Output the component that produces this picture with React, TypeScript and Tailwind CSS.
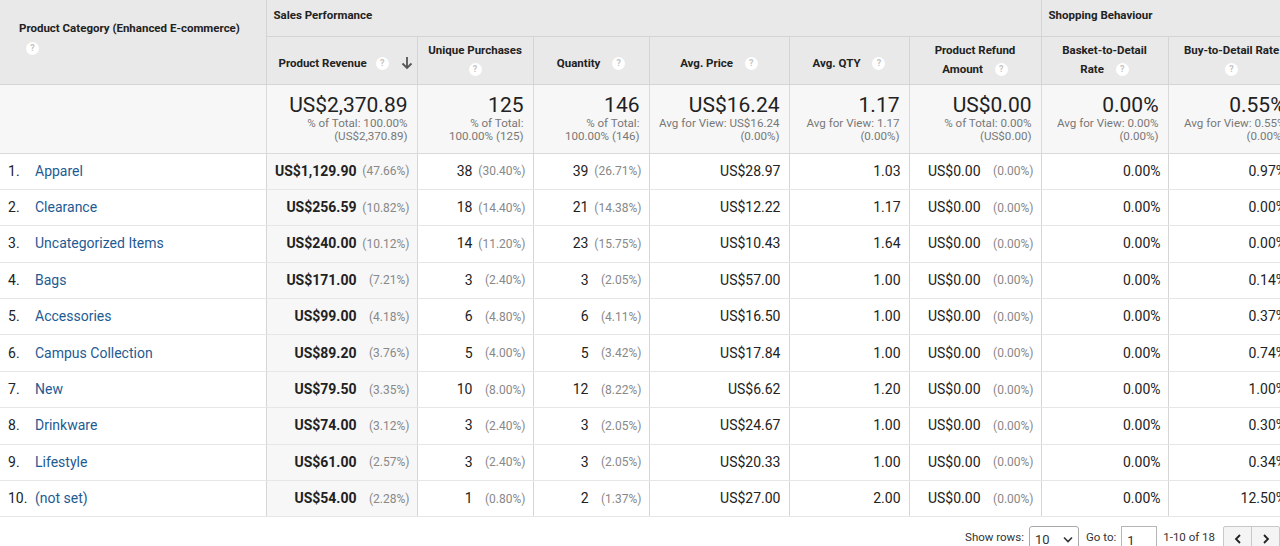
import React from "react";

type Row = {
  name: string;
  rev: string;
  revPct: string;
  uniq: string;
  uniqPct: string;
  qty: string;
  qtyPct: string;
  price: string;
  avgQty: string;
  btd: string;
};

const rows: Row[] = [
  { name: "Apparel", rev: "US$1,129.90", revPct: "(47.66%)", uniq: "38", uniqPct: "(30.40%)", qty: "39", qtyPct: "(26.71%)", price: "US$28.97", avgQty: "1.03", btd: "0.97%" },
  { name: "Clearance", rev: "US$256.59", revPct: "(10.82%)", uniq: "18", uniqPct: "(14.40%)", qty: "21", qtyPct: "(14.38%)", price: "US$12.22", avgQty: "1.17", btd: "0.00%" },
  { name: "Uncategorized Items", rev: "US$240.00", revPct: "(10.12%)", uniq: "14", uniqPct: "(11.20%)", qty: "23", qtyPct: "(15.75%)", price: "US$10.43", avgQty: "1.64", btd: "0.00%" },
  { name: "Bags", rev: "US$171.00", revPct: "(7.21%)", uniq: "3", uniqPct: "(2.40%)", qty: "3", qtyPct: "(2.05%)", price: "US$57.00", avgQty: "1.00", btd: "0.14%" },
  { name: "Accessories", rev: "US$99.00", revPct: "(4.18%)", uniq: "6", uniqPct: "(4.80%)", qty: "6", qtyPct: "(4.11%)", price: "US$16.50", avgQty: "1.00", btd: "0.37%" },
  { name: "Campus Collection", rev: "US$89.20", revPct: "(3.76%)", uniq: "5", uniqPct: "(4.00%)", qty: "5", qtyPct: "(3.42%)", price: "US$17.84", avgQty: "1.00", btd: "0.74%" },
  { name: "New", rev: "US$79.50", revPct: "(3.35%)", uniq: "10", uniqPct: "(8.00%)", qty: "12", qtyPct: "(8.22%)", price: "US$6.62", avgQty: "1.20", btd: "1.00%" },
  { name: "Drinkware", rev: "US$74.00", revPct: "(3.12%)", uniq: "3", uniqPct: "(2.40%)", qty: "3", qtyPct: "(2.05%)", price: "US$24.67", avgQty: "1.00", btd: "0.30%" },
  { name: "Lifestyle", rev: "US$61.00", revPct: "(2.57%)", uniq: "3", uniqPct: "(2.40%)", qty: "3", qtyPct: "(2.05%)", price: "US$20.33", avgQty: "1.00", btd: "0.34%" },
  { name: "(not set)", rev: "US$54.00", revPct: "(2.28%)", uniq: "1", uniqPct: "(0.80%)", qty: "2", qtyPct: "(1.37%)", price: "US$27.00", avgQty: "2.00", btd: "12.50%" },
];

function Help() {
  return (
    <span className="inline-flex h-[13px] w-[13px] items-center justify-center rounded-full bg-white align-middle text-[9px] font-bold leading-none text-[#c4c4c4]">
      ?
    </span>
  );
}

function Total({ big, l1, l2 }: { big: string; l1: string; l2: string }) {
  return (
    <td className="border-r border-b border-[#dadada] bg-[#f7f7f7] pr-[9px] text-right align-top pt-[8px]">
      <div className="text-[21px] leading-[24px] text-[#222]">{big}</div>
      <div className="text-[11.6px] leading-[13px] text-[#777]">{l1}</div>
      <div className="text-[11.6px] leading-[13px] text-[#777]">{l2}</div>
    </td>
  );
}

function Pair({ v, p, bold, bg }: { v: string; p: string; bold?: boolean; bg?: boolean }) {
  return (
    <td className={`border-r border-b border-r-[#d6d6d6] border-b-[#e6e6e6] pr-[7px] ${bg ? "bg-[#f7f7f7]" : ""}`}>
      <div className="flex items-center justify-end">
        <span className={`text-[14px] ${bold ? "font-bold" : ""} text-[#222]`}>{v}</span>
        <span className="w-[53px] text-right text-[12px] text-[#888]">{p}</span>
      </div>
    </td>
  );
}

export default function App() {
  const hd = "border-r border-b border-[#d4d4d4] bg-[#e9e9e9] text-center text-[11.5px] font-bold leading-[19px] text-[#222]";
  return (
    <div className="h-[546px] w-[1280px] overflow-hidden bg-white" style={{ fontFamily: "Roboto, 'Liberation Sans', sans-serif" }}>
      <table className="w-[1295px] table-fixed border-collapse">
        <colgroup>
          <col className="w-[266px]" />
          <col className="w-[151px]" />
          <col className="w-[116px]" />
          <col className="w-[116px]" />
          <col className="w-[140px]" />
          <col className="w-[120px]" />
          <col className="w-[132px]" />
          <col className="w-[127px]" />
          <col className="w-[127px]" />
        </colgroup>
        <thead>
          <tr className="h-[36px]">
            <th rowSpan={2} className="border-r border-b border-[#d4d4d4] bg-[#e9e9e9] pl-[19px] pt-[18px] text-left align-top text-[11.5px] font-bold leading-[20px] text-[#222]">
              <div>Product Category (Enhanced E-commerce)</div>
              <div className="pl-[7px]"><Help /></div>
            </th>
            <th colSpan={6} className="border-r border-b border-[#d4d4d4] bg-[#e9e9e9] pl-[7px] pb-[5px] text-left text-[11.5px] font-bold text-[#222]">
              Sales Performance
            </th>
            <th colSpan={2} className="border-b border-[#d4d4d4] bg-[#e9e9e9] pl-[7px] pb-[5px] text-left text-[11.5px] font-bold text-[#222]">
              Shopping Behaviour
            </th>
          </tr>
          <tr className="h-[48px]">
            <th className={hd}>
              <div className="flex items-center pl-[12px] pr-[4px] pt-[6px]">
                <span>Product Revenue</span>
                <span className="ml-[9px]"><Help /></span>
                <svg className="ml-auto" width="12" height="14" viewBox="0 0 12 14">
                  <path d="M6 1v11M1.5 7.5L6 12l4.5-4.5" stroke="#555" strokeWidth="1.8" fill="none" />
                </svg>
              </div>
            </th>
            <th className={hd}>
              <div>Unique Purchases</div>
              <div><Help /></div>
            </th>
            <th className={hd}>
              <span className="pt-[6px] inline-block">Quantity <span className="ml-[9px]"><Help /></span></span>
            </th>
            <th className={hd}>
              <span className="pt-[6px] inline-block">Avg. Price <span className="ml-[9px]"><Help /></span></span>
            </th>
            <th className={hd}>
              <span className="pt-[6px] inline-block">Avg. QTY <span className="ml-[9px]"><Help /></span></span>
            </th>
            <th className={hd}>
              <div>Product Refund</div>
              <div>Amount <span className="ml-[9px]"><Help /></span></div>
            </th>
            <th className={hd}>
              <div>Basket-to-Detail</div>
              <div>Rate <span className="ml-[9px]"><Help /></span></div>
            </th>
            <th className={hd}>
              <div>Buy-to-Detail Rate</div>
              <div><Help /></div>
            </th>
          </tr>
        </thead>
        <tbody>
          <tr className="h-[69px]">
            <td className="border-r border-b border-[#dadada] bg-[#f7f7f7]" />
            <Total big="US$2,370.89" l1="% of Total: 100.00%" l2="(US$2,370.89)" />
            <Total big="125" l1="% of Total:" l2="100.00% (125)" />
            <Total big="146" l1="% of Total:" l2="100.00% (146)" />
            <Total big="US$16.24" l1="Avg for View: US$16.24" l2="(0.00%)" />
            <Total big="1.17" l1="Avg for View: 1.17" l2="(0.00%)" />
            <Total big="US$0.00" l1="% of Total: 0.00%" l2="(US$0.00)" />
            <Total big="0.00%" l1="Avg for View: 0.00%" l2="(0.00%)" />
            <Total big="0.55%" l1="Avg for View: 0.55%" l2="(0.00%)" />
          </tr>
          {rows.map((r, i) => (
            <tr key={r.name} className="h-[36.4px] text-[14px] text-[#222]">
              <td className="border-r border-b border-r-[#d6d6d6] border-b-[#e6e6e6]">
                <div className="flex items-center">
                  <span className="w-[35px] pl-[8px] text-left">{i + 1}.</span>
                  <span className="text-[#1e5b93]">{r.name}</span>
                </div>
              </td>
              <Pair v={r.rev} p={r.revPct} bold bg />
              <Pair v={r.uniq} p={r.uniqPct} />
              <Pair v={r.qty} p={r.qtyPct} />
              <td className="border-r border-b border-r-[#d6d6d6] border-b-[#e6e6e6] pr-[8px] text-right">{r.price}</td>
              <td className="border-r border-b border-r-[#d6d6d6] border-b-[#e6e6e6] pr-[8px] text-right">{r.avgQty}</td>
              <Pair v="US$0.00" p="(0.00%)" />
              <td className="border-r border-b border-r-[#d6d6d6] border-b-[#e6e6e6] pr-[7px] text-right">0.00%</td>
              <td className="border-b border-b-[#e6e6e6] pr-[9px] text-right">{r.btd}</td>
            </tr>
          ))}
        </tbody>
      </table>
      <div className="flex items-start justify-end pt-[9px] text-[11.5px] text-[#333]">
        <span className="mt-[3px] mr-[5px]">Show rows:</span>
        <div className="flex h-[26px] w-[50px] items-center justify-between rounded-[3px] border border-[#a9a9a9] bg-white px-[5px]">
          <span className="text-[13px]">10</span>
          <svg width="10" height="7" viewBox="0 0 10 7">
            <path d="M1 1.5l4 4 4-4" stroke="#333" strokeWidth="1.6" fill="none" />
          </svg>
        </div>
        <span className="mt-[3px] ml-[7px] mr-[5px]">Go to:</span>
        <div className="h-[26px] w-[36px] border border-[#b5b5b5] bg-white px-[5px] pt-[4px] text-[13px]">1</div>
        <span className="mt-[3px] ml-[6px] mr-[8px]">1-10 of 18</span>
        <div className="flex h-[26px] rounded-[2px] border border-[#c8c8c8] bg-[#f4f4f4]">
          <div className="flex w-[28px] items-center justify-center border-r border-[#c8c8c8]">
            <svg width="8" height="10" viewBox="0 0 8 10"><path d="M6 1L2 5l4 4" stroke="#222" strokeWidth="1.8" fill="none" /></svg>
          </div>
          <div className="flex w-[27px] items-center justify-center">
            <svg width="8" height="10" viewBox="0 0 8 10"><path d="M2 1l4 4-4 4" stroke="#222" strokeWidth="1.8" fill="none" /></svg>
          </div>
        </div>
      </div>
    </div>
  );
}
